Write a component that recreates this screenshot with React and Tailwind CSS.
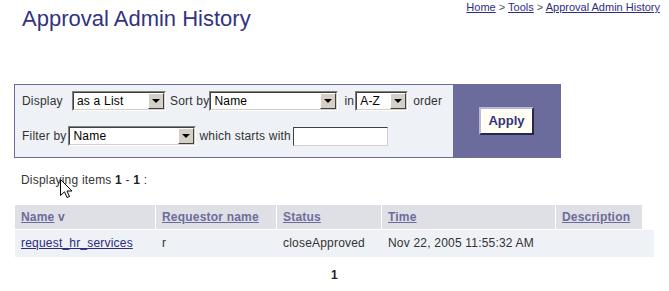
import React from 'react';

const Select = ({ value, width }) => (
  <div
    className="flex h-[20px] border border-t-[#808080] border-l-[#808080] border-b-white border-r-white"
    style={{ width }}
  >
    <div className="flex flex-1 border border-t-[#404040] border-l-[#404040] border-b-[#d4d0c8] border-r-[#d4d0c8] bg-white">
      <div className="flex-1 pl-[3px] text-[12px] leading-[16px] text-black">{value}</div>
      <div className="flex w-[16px] items-center justify-center border border-t-white border-l-white border-b-[#404040] border-r-[#404040] bg-[#d4d0c8]">
        <div className="h-0 w-0 border-x-[4px] border-t-[4px] border-x-transparent border-t-black" />
      </div>
    </div>
  </div>
);

const columns = [
  { key: 'name', label: 'Name', width: 'w-[140px]' },
  { key: 'requestor', label: 'Requestor name', width: 'w-[120px]' },
  { key: 'status', label: 'Status', width: 'w-[104px]' },
  { key: 'time', label: 'Time', width: 'w-[173px]' },
  { key: 'description', label: 'Description', width: 'w-[86px]' },
];

const rows = [
  {
    name: 'request_hr_services',
    requestor: 'r',
    status: 'closeApproved',
    time: 'Nov 22, 2005 11:55:32 AM',
    description: '',
  },
];

export default function App() {
  return (
    <div className="relative h-[291px] w-[669px] overflow-hidden bg-white font-['Liberation_Sans',Arial,sans-serif] text-[12px] text-[#333]">
      {/* Header */}
      <div className="flex items-start justify-between">
        <h1 className="ml-[22px] mt-[6px] text-[22px] leading-[26px] font-normal text-[#33337f]">
          Approval Admin History
        </h1>
        <div className="mr-[9px] mt-[1px] text-[11px] leading-[13px] text-[#555]">
          <a className="text-[#2e2e80] underline">Home</a> &gt;{' '}
          <a className="text-[#2e2e80] underline">Tools</a> &gt;{' '}
          <a className="text-[#2e2e80] underline">Approval Admin History</a>
        </div>
      </div>

      {/* Filter box */}
      <div className="ml-[14px] mt-[52px] flex h-[74px] w-[547px] border border-[#6c6c9c] tracking-[0.2px]">
        <div className="flex-1 bg-[#eef1f6] pl-[7px] pt-[6px]">
          <div className="flex h-[20px] items-center">
            <span className="w-[50px]">Display</span>
            <Select value="as a List" width={94} />
            <span className="ml-[4px]">Sort by</span>
            <Select value="Name" width={129} />
            <span className="ml-[6px]">in</span>
            <div className="ml-[1px]">
              <Select value="A-Z" width={53} />
            </div>
            <span className="ml-[5px]">order</span>
          </div>
          <div className="mt-[15px] flex h-[20px] items-center">
            <span>Filter by</span>
            <div className="ml-[2px]">
              <Select value="Name" width={128} />
            </div>
            <span className="ml-[3px]">which starts with</span>
            <div className="ml-[2px] h-[19px] w-[95px] border border-t-[#404040] border-l-[#404040] border-b-[#d4d0c8] border-r-[#d4d0c8] bg-white" />
          </div>
        </div>
        <div className="flex w-[107px] items-center justify-center bg-[#6c6c9c]">
          <button className="h-[28px] w-[55px] border-2 border-t-[#b8b8d8] border-l-[#b8b8d8] border-b-[#262650] border-r-[#262650] bg-[#fffff4] text-[13px] font-bold tracking-normal text-[#33337f]">
            Apply
          </button>
        </div>
      </div>

      {/* Results */}
      <div className="ml-[21px] mt-[15px] leading-[14px] tracking-[0.2px]">
        Displaying items <b className="text-[#222]">1</b> - <b className="text-[#222]">1</b> :
      </div>

      <div className="ml-[15px] mt-[18px] w-[639px] tracking-[0.2px]">
        <div className="flex h-[24px] gap-px">
          {columns.map((col) => (
            <div
              key={col.key}
              className={`${col.width} bg-[#dfe0e5] pl-[6px] text-[12px] font-bold leading-[24px] text-[#6c6c9c]`}
            >
              <a className="underline">{col.label}</a>
              {col.key === 'name' && <span> v</span>}
            </div>
          ))}
        </div>
        {rows.map((row) => (
          <div key={row.name} className="mt-px flex h-[27px] gap-px bg-[#eef1f6] leading-[27px]">
            <div className="w-[140px] pl-[6px]">
              <a className="text-[#2b2b80] underline">{row.name}</a>
            </div>
            <div className="w-[120px] pl-[6px]">{row.requestor}</div>
            <div className="w-[104px] pl-[6px]">{row.status}</div>
            <div className="w-[173px] pl-[6px]">{row.time}</div>
            <div className="flex-1 pl-[6px]">{row.description}</div>
          </div>
        ))}
        <div className="mt-[11px] text-center font-bold leading-[14px] text-[#222]">1</div>
      </div>

      {/* Mouse pointer */}
      <svg className="absolute left-[60px] top-[179px]" width="13" height="20" viewBox="0 0 13 20">
        <path
          d="M0.5 0.5 L0.5 16.5 L4.5 12.8 L7 18.5 L9.5 17.5 L7 12 L12 12 Z"
          fill="white"
          stroke="black"
          strokeWidth="1"
        />
      </svg>
    </div>
  );
}
